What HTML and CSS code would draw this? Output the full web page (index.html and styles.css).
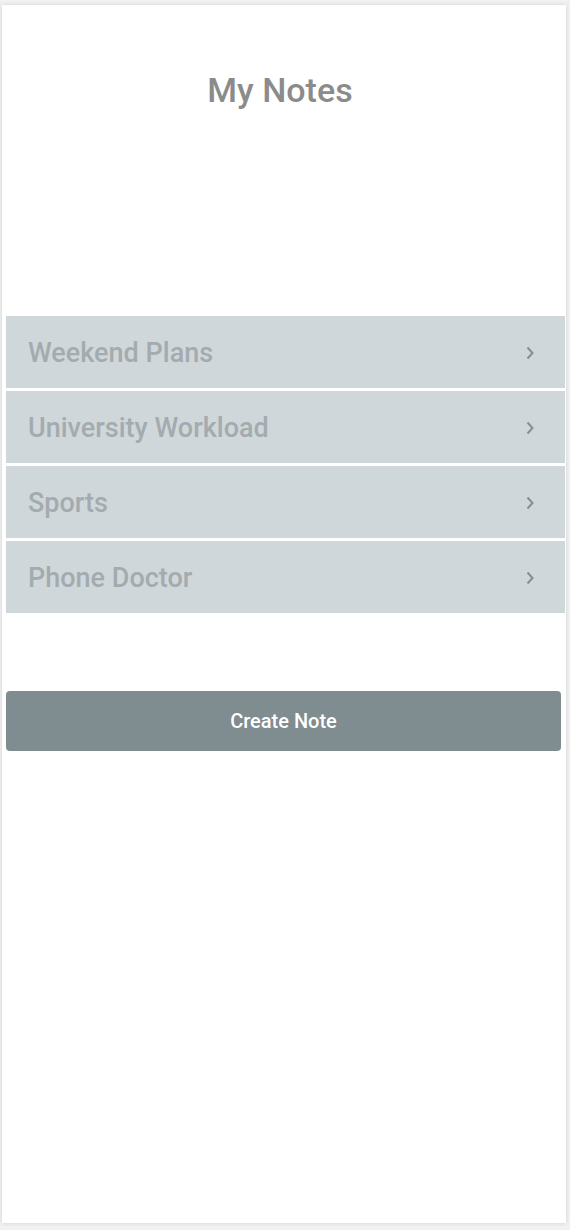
FILE: index.html
```html
<!DOCTYPE html>
<html>
<head>
<meta charset="utf-8">
<link rel="stylesheet" href="styles.css">
</head>
<body>
<div class="card">
  <h1 class="title">My Notes</h1>
  <ul class="notes">
    <li class="note"><span class="note-name">Weekend Plans</span><svg class="chev" width="10" height="16" viewBox="0 0 10 16"><polyline points="2.5,2.5 7.5,8 2.5,13.5" fill="none" stroke="#878d91" stroke-width="2"/></svg></li>
    <li class="note"><span class="note-name">University Workload</span><svg class="chev" width="10" height="16" viewBox="0 0 10 16"><polyline points="2.5,2.5 7.5,8 2.5,13.5" fill="none" stroke="#878d91" stroke-width="2"/></svg></li>
    <li class="note"><span class="note-name">Sports</span><svg class="chev" width="10" height="16" viewBox="0 0 10 16"><polyline points="2.5,2.5 7.5,8 2.5,13.5" fill="none" stroke="#878d91" stroke-width="2"/></svg></li>
    <li class="note"><span class="note-name">Phone Doctor</span><svg class="chev" width="10" height="16" viewBox="0 0 10 16"><polyline points="2.5,2.5 7.5,8 2.5,13.5" fill="none" stroke="#878d91" stroke-width="2"/></svg></li>
  </ul>
  <button class="create">Create Note</button>
</div>
</body>
</html>
```

FILE: styles.css
```css
html, body {
  margin: 0;
  padding: 0;
  background: #f1f1f1;
}
body {
  font-family: Roboto, "Liberation Sans", sans-serif;
  padding: 5px 4px 7px 2px;
}
.card {
  width: 564px;
  height: 1218px;
  background: #ffffff;
  box-shadow: 0 0 4px rgba(0, 0, 0, 0.14);
  display: flex;
  flex-direction: column;
}
.title {
  margin: 0;
  padding-top: 65px;
  height: 40px;
  line-height: 40px;
  font-size: 34px;
  font-weight: 500;
  color: #8b8b8b;
  text-align: center;
  padding-right: 8px;
}
.notes {
  list-style: none;
  margin: 206px 1px 0 4px;
  padding: 0;
  display: flex;
  flex-direction: column;
  gap: 3px;
}
.note {
  height: 72px;
  background: #d0d7da;
  display: flex;
  align-items: center;
  justify-content: space-between;
  padding: 2px 30px 0 22px;
  box-sizing: border-box;
}
.note-name {
  font-size: 27px;
  font-weight: 500;
  color: #a4abaf;
  line-height: 32px;
}
.chev {
  display: block;
}
.create {
  margin: 78px 5px 0 4px;
  height: 60px;
  border: none;
  border-radius: 4px;
  background: #7f8c90;
  color: #ffffff;
  font-family: Roboto, "Liberation Sans", sans-serif;
  font-size: 20px;
  font-weight: 500;
  padding: 0;
}
```
